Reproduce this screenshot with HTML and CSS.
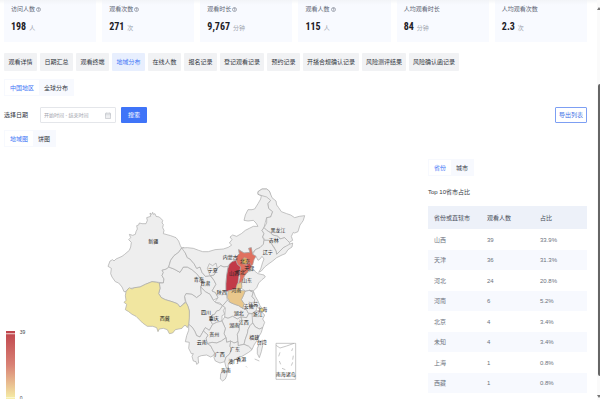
FILE: index.html
```html
<!DOCTYPE html>
<html lang="zh-CN">
<head>
<meta charset="utf-8">
<title>地域分布</title>
<link rel="stylesheet" href="styles.css">
</head>
<body>
<main class="page">
  <section class="stats">
    <div class="stat"><div class="stat-name">访问人数<svg class="help" viewBox="0 0 10 10"><circle cx="5" cy="5" r="4"/><path d="M3.6 4a1.4 1.4 0 1 1 1.4 1.5v1M5 7.2v.8"/></svg></div><div class="stat-value"><b>198</b><span>人</span></div></div>
    <div class="stat"><div class="stat-name">观看次数<svg class="help" viewBox="0 0 10 10"><circle cx="5" cy="5" r="4"/><path d="M3.6 4a1.4 1.4 0 1 1 1.4 1.5v1M5 7.2v.8"/></svg></div><div class="stat-value"><b>271</b><span>次</span></div></div>
    <div class="stat"><div class="stat-name">观看时长<svg class="help" viewBox="0 0 10 10"><circle cx="5" cy="5" r="4"/><path d="M3.6 4a1.4 1.4 0 1 1 1.4 1.5v1M5 7.2v.8"/></svg></div><div class="stat-value"><b>9,767</b><span>分钟</span></div></div>
    <div class="stat"><div class="stat-name">观看人数<svg class="help" viewBox="0 0 10 10"><circle cx="5" cy="5" r="4"/><path d="M3.6 4a1.4 1.4 0 1 1 1.4 1.5v1M5 7.2v.8"/></svg></div><div class="stat-value"><b>115</b><span>人</span></div></div>
    <div class="stat"><div class="stat-name">人均观看时长</div><div class="stat-value"><b>84</b><span>分钟</span></div></div>
    <div class="stat"><div class="stat-name">人均观看次数</div><div class="stat-value"><b>2.3</b><span>次</span></div></div>
  </section>

  <nav class="tabs">
    <button class="tab">观看详情</button>
    <button class="tab">日期汇总</button>
    <button class="tab">观看终端</button>
    <button class="tab active">地域分布</button>
    <button class="tab">在线人数</button>
    <button class="tab">报名记录</button>
    <button class="tab">登记观看记录</button>
    <button class="tab">预约记录</button>
    <button class="tab">开播合规确认记录</button>
    <button class="tab">风险测评结果</button>
    <button class="tab">风险确认函记录</button>
  </nav>

  <div class="segment"><button class="seg active">中国地区</button><button class="seg">全球分布</button></div>

  <form class="filter">
    <label for="range">选择日期</label>
    <div class="range">
      <input id="range" type="text" placeholder="开始时间 - 结束时间">
      <svg class="calendar" viewBox="0 0 12 14"><path d="M1 2.5h10v10.5H1zM1 5.5h10M3.5 1v2M8.500 1v2M3 8h2M7 8h2M3 10.500h2M7 10.500h2"/></svg>
    </div>
    <button class="search" type="button">搜索</button>
    <button class="export" type="button">导出列表</button>
  </form>

  <div class="content">
    <section class="chart">
      <div class="segment"><button class="seg active">地域图</button><button class="seg">饼图</button></div>
      <svg class="map" viewBox="0 450 1284 750" role="img" aria-label="中国地域分布">
        <defs>
          <linearGradient id="heat" x1="0" y1="0" x2="0" y2="1">
            <stop offset="0" stop-color="#bf444c"/><stop offset=".5" stop-color="#d98275"/><stop offset="1" stop-color="#f6efa6"/>
          </linearGradient>
        </defs>
        <g class="legend">
          <rect x="18" y="996" width="27" height="204" fill="url(#heat)"/>
          <path d="M18 1004h27" stroke="#e9b4b4" stroke-width="4"/>
          <path d="M18 1196h27" stroke="#fbf7d3" stroke-width="3"/>
          <text x="59" y="1004">39</text>
          <text x="59" y="1204">0</text>
        </g>
        <g transform="translate(300 540)">
          <g class="land">
            <path d="M245 207L241 200L236 186L228 176L212 170L190 164L192 154L188 146L190 136L186 132L188 124L178 114L168 112L165 104L160 106L158 100L155 106L150 102L152 112L140 116L142 124L138 134L126 134L118 132L116 138L110 140L112 150L108 158L106 166L98 169L88 166L92 176L86 182L94 190L92 204L88 214L74 226L66 232L48 240L42 246L38 242L30 246L24 262L34 268L32 284L36 294L46 308L56 312L66 324L72 338L78 338L84 330L104 326L120 324L136 316L156 308L176 310L190 312L192 300L186 290L190 280L186 274L200 270L206 264L212 244L222 230L236 220Z"/>
            <path d="M206 264L222 270L240 280L250 264L262 264L276 272L290 284L300 296L308 310L302 324L304 345L290 356L276 346L258 344L254 354L256 368L248 376L240 384L232 374L216 368L196 362L184 356L176 344L180 328L178 312L190 312L192 300L186 290L190 280L186 274L200 270Z"/>
            <path d="M245 207L236 220L222 230L212 244L206 264L222 270L240 280L250 264L262 264L276 272L290 284L300 296L308 310L302 324L316 338L330 346L340 364L354 356L346 340L336 336L348 316L342 304L330 290L316 292L306 280L300 264L290 268L282 254L270 240L262 236L256 222L252 206Z"/>
            <path d="M245 207L262 206L280 208L296 214L308 218L325 218L345 212L370 210L385 205L395 198L388 192L396 182L390 174L398 168L410 172L424 164L436 154L448 148L460 142L474 142L468 132L460 124L444 126L432 124L436 108L444 92L456 92L464 90L474 74L482 60L484 50L474 46L474 38L486 30L500 30L508 36L512 50L516 62L524 66L526 78L518 90L512 84L508 72L512 64L504 74L506 88L518 98L512 114L500 116L496 130L492 146L486 154L492 164L488 174L492 184L490 196L480 206L466 212L454 226L454 206L446 208L450 220L432 222L416 212L418 224L410 232L408 244L396 248L384 262L372 264L362 260L352 268L342 288L332 290L316 292L306 280L300 264L290 268L282 254L270 240L262 236L256 222Z"/>
            <path d="M474 46L474 38L486 30L500 30L508 36L516 56L528 66L530 78L536 86L544 98L560 104L572 108L584 116L598 112L614 110L610 124L606 130L600 138L594 158L584 162L580 160L574 172L578 184L568 190L562 184L554 176L540 180L534 172L518 168L510 160L500 154L492 146L500 132L500 116L512 114L518 98L506 88L504 74L512 64L500 54L486 50Z"/>
            <path d="M492 146L486 154L492 164L488 174L496 184L506 184L514 194L522 204L528 216L530 226L542 214L550 206L562 202L570 196L568 190L562 184L554 176L540 180L534 172L518 168L510 160L500 154Z"/>
            <path d="M492 184L490 196L480 206L466 212L458 226L468 232L474 244L480 240L486 232L492 240L488 250L482 270L476 280L484 276L494 264L504 256L518 246L530 236L546 228L556 224L564 212L576 204L578 192L568 196L550 206L530 226L528 216L514 194L506 184Z"/>
            <path d="M332 290L342 304L348 316L336 336L346 340L354 356L344 370L360 372L368 380L382 364L378 338L378 310L380 290L384 262L372 264L362 260L352 268L342 288Z"/>
            <path d="M322 268L328 254L338 260L348 252L352 268L342 288L330 290Z"/>
            <path d="M424 308L432 288L446 278L462 272L466 278L474 284L492 288L496 294L486 302L476 312L470 326L460 336L448 334L436 336L424 328Z"/>
            <path d="M268 396L264 382L258 370L254 352L258 344L276 346L290 356L304 345L302 324L316 338L330 346L340 364L346 370L360 376L368 380L358 394L350 396L344 406L336 408L330 422L338 436L328 454L316 446L310 456L300 474L290 470L284 456L276 444L266 436Z"/>
            <path d="M368 380L376 386L370 394L374 406L366 410L366 426L350 430L338 436L330 422L336 408L344 406L350 396L358 394Z"/>
            <path d="M368 380L382 364L390 370L404 376L416 380L428 388L440 392L446 404L440 416L424 414L412 420L398 412L384 418L374 414L376 386Z"/>
            <path d="M434 338L448 334L460 340L456 352L464 362L462 374L472 382L468 396L456 404L444 402L440 392L428 388L432 374L424 362L430 350Z"/>
            <path d="M448 334L460 336L466 352L474 366L480 380L488 390L480 394L472 382L462 374L464 362L456 352L460 340Z"/>
            <path d="M468 396L480 394L484 398L494 408L488 420L494 430L488 446L478 450L466 444L458 432L452 418L456 404Z"/>
            <path d="M384 418L398 412L412 420L422 414L426 424L418 438L418 454L412 466L414 488L402 492L392 486L380 490L378 476L372 464L376 448L366 426L374 414Z"/>
            <path d="M424 414L440 416L446 404L456 404L458 432L450 440L444 452L442 464L436 480L432 496L414 500L414 488L412 466L418 454L418 438L426 424Z"/>
            <path d="M458 432L466 444L478 450L488 446L484 460L476 474L470 486L462 498L456 512L446 502L432 496L436 480L442 464L444 452L450 440Z"/>
            <path d="M310 456L316 446L328 454L338 436L350 430L366 426L376 448L372 464L378 476L364 486L350 492L336 490L322 494L318 478L324 468Z"/>
            <path d="M266 436L276 444L284 456L290 470L300 474L310 456L324 468L318 478L322 494L332 500L338 512L344 522L340 530L332 534L320 528L304 530L294 534L296 552L290 556L288 548L280 546L276 532L280 524L274 524L266 508L268 490L256 488L260 470L266 454Z"/>
            <path d="M322 494L336 490L350 492L364 486L378 476L380 490L392 486L390 502L396 510L388 526L378 534L374 548L360 552L346 546L342 536L344 522L338 512L332 500Z"/>
            <path d="M392 486L402 492L414 488L414 500L432 496L446 502L456 512L446 520L426 532L412 536L400 546L390 548L384 558L386 568L378 566L374 548L378 534L388 526L396 510L390 502Z"/>
            <path d="M362 584L370 577L382 578L380 590L376 600L368 606L361 600Z"/>
            <path d="M478 494L486 484L488 500L484 518L478 536L472 524L472 508Z"/>
          </g>
          <g class="land">
            <path fill="#f1e6a0" d="M78 338L84 330L88 326L96 330L104 326L120 324L136 316L156 308L170 310L178 312L180 328L176 344L184 356L196 362L216 368L232 374L240 384L250 376L258 370L264 382L268 396L268 416L266 436L262 446L258 440L252 440L246 448L236 450L226 452L218 462L208 464L202 452L190 448L178 450L174 458L170 446L158 442L142 442L128 432L118 422L108 412L96 406L86 398L76 392L80 376L72 370L78 364L76 350Z"/>
            <path fill="#e0705f" d="M416 212L418 224L410 232L408 244L412 256L422 264L418 280L420 296L416 312L414 328L424 324L426 306L434 290L444 278L448 264L458 258L462 242L468 232L458 226L454 206L446 208L450 220L432 222Z"/>
            <path fill="#c23a48" d="M408 244L396 248L388 256L384 268L380 290L378 314L378 338L392 334L408 330L414 312L416 296L418 280L422 264L412 256Z"/>
            <path fill="#e9c78c" d="M384 336L396 334L408 328L412 314L424 310L426 324L420 334L436 336L430 350L424 362L432 374L428 388L416 380L404 376L390 370L382 356Z"/>
            <path fill="#e7b35e" d="M426 244L432 236L440 238L444 250L436 256L428 254Z"/>
            <path fill="#c94949" d="M440 256L450 252L454 262L450 274L442 272Z"/>
            <path fill="#f1dc70" d="M480 388L488 388L492 396L484 398Z"/>
          </g>
          <path class="isles" d="M528 493h59v108h-59zM528 499l12 8l20-6l22-8M540 520l-4 12M538 546l4 10M546 568l10 4M574 560l4-10M580 530l-2 12M578 508l-3 8M438 562l3 3M464 540l14 6"/>
          <g class="names">
            <text x="160" y="191">新疆</text><text x="194" y="422">西藏</text><text x="296" y="307">青海</text><text x="316" y="318">甘肃</text><text x="338" y="279">宁夏</text><text x="391" y="239">内蒙古</text><text x="534" y="160">黑龙江</text><text x="521" y="189">吉林</text><text x="503" y="224">辽宁</text><text x="435" y="252">北京</text><text x="448" y="273">天津</text><text x="421" y="285">河北</text><text x="402" y="289">山西</text><text x="441" y="308">山东</text><text x="365" y="346">陕西</text><text x="409" y="339">河南</text><text x="318" y="405">四川</text><text x="341" y="423">重庆</text><text x="416" y="407">湖北</text><text x="446" y="387">安徽</text><text x="460" y="380">江苏</text><text x="487" y="396">上海</text><text x="473" y="410">浙江</text><text x="403" y="445">湖南</text><text x="431" y="435">江西</text><text x="343" y="471">贵州</text><text x="305" y="496">云南</text><text x="359" y="531">广西</text><text x="405" y="515">广东</text><text x="463" y="480">福建</text><text x="485" y="496">台湾</text><text x="424" y="546">香港</text><text x="400" y="553">澳门</text><text x="377" y="579">海南</text><text x="557" y="590">南海诸岛</text>
          </g>
        </g>
      </svg>
    </section>

    <section class="ranking">
      <div class="segment"><button class="seg active">省份</button><button class="seg">城市</button></div>
      <h2>Top 10省市占比</h2>
      <table>
        <thead><tr><th>省份或直辖市</th><th>观看人数</th><th>占比</th></tr></thead>
        <tbody>
          <tr><td>山西</td><td>39</td><td>33.9%</td></tr>
          <tr><td>天津</td><td>36</td><td>31.3%</td></tr>
          <tr><td>河北</td><td>24</td><td>20.8%</td></tr>
          <tr><td>河南</td><td>6</td><td>5.2%</td></tr>
          <tr><td>北京</td><td>4</td><td>3.4%</td></tr>
          <tr><td>未知</td><td>4</td><td>3.4%</td></tr>
          <tr><td>上海</td><td>1</td><td>0.8%</td></tr>
          <tr><td>西藏</td><td>1</td><td>0.8%</td></tr>
        </tbody>
      </table>
    </section>
  </div>
</main>
<div class="scrollbar"><i class="up"></i><i class="thumb"></i><i class="down"></i></div>
</body>
</html>
```
FILE: styles.css
```css
* { box-sizing: border-box; }
html, body { height: 100%; margin: 0; overflow: hidden; }
body {
  background: #fff;
  color: #33373f;
  font-family: "Liberation Sans", "Noto Sans CJK SC", sans-serif;
  font-size: 6px;
  line-height: 8px;
}
button, input { font: inherit; margin: 0; border: 0; }
button { display: block; white-space: nowrap; }

.page { padding: 0 13px 0 4px; background: linear-gradient(#f4f5f7, #fff 4px); }

.stats { display: grid; grid-template-columns: repeat(6, 1fr); gap: 6px; }
.stat { padding: 5px 7px 7px; background: linear-gradient(#f2f4f8, #f8faff 5px); }
.stat-name { display: flex; align-items: center; gap: 1px; color: #5d6573; }
.help { width: 5px; height: 5px; fill: none; stroke: #5d6573; }
.stat-value { display: flex; align-items: baseline; gap: 3px; margin-top: 7px; line-height: 14px; color: #a0a5ae; }
.stat-value b { color: #1d2026; font: bold 10px/14px "Liberation Sans Narrow", "Roboto Condensed", "Liberation Sans", sans-serif; }

.tabs { display: flex; gap: 3px; margin-top: 11px; }
.tab { min-width: 33px; height: 18px; padding: 0 4px; border-radius: 1px; background: #f1f2f4; color: #33373f; }
.tab.active { background: #e8effe; color: #3f76f6; }

.segment { display: flex; width: max-content; padding: 1px; background: #f7f9fe; }
.seg { height: 15px; padding: 0 5px; background: transparent; color: #33373f; }
.seg.active { background: #fff; color: #3f76f6; }
.tabs + .segment { margin-top: 8px; }

.filter { display: flex; align-items: center; height: 16px; margin-top: 11px; }
.filter label { width: 36px; }
.range { display: flex; align-items: center; width: 76px; height: 16px; padding: 0 4px 0 3px; border: 1px solid #e4e6ea; border-radius: 1px; }
.range input { flex: 1; min-width: 0; height: 12px; padding: 0; background: transparent; font-size: 5px; outline: 0; }
.range input::placeholder { color: #9fa4ad; opacity: 1; }
.calendar { width: 6px; height: 7px; fill: none; stroke: #a5a9b1; }
.search { height: 16px; margin-left: 5px; padding: 0 7px; border-radius: 1px; background: #3f74f8; color: #fff; }
.export { height: 16px; margin-left: auto; padding: 0 3px; border: 1px solid #7d9ff3; border-radius: 1px; background: #fff; color: #3f70e6; }

.content { display: grid; grid-template-columns: 8fr 3fr; }
.chart { margin-left: -4px; padding-top: 7px; }
.chart .segment { margin-left: 4px; }
.map { display: block; width: 100%; margin-top: 2px; }
.land path { stroke: #a8a8a8; stroke-width: 2; stroke-linejoin: round; }
.land { fill: #eee; }
.isles { fill: none; stroke: #aaa; stroke-width: 2; }
.names { fill: #222; font-size: 15px; text-anchor: middle; }
.legend text { fill: #444; font-size: 15px; }

.ranking { padding-top: 36px; }
h2 { margin: 12px 0 10px; font-size: 6px; font-weight: 400; line-height: 8px; }
table { width: 100%; border-collapse: collapse; table-layout: fixed; }
th, td { padding: 0 0 0 6px; text-align: left; font-weight: 400; white-space: nowrap; }
th { height: 23px; background: #edf1f9; color: #454b57; }
td { height: 21px; color: #6b717c; }
tbody tr:nth-child(even) { background: #f7f9fe; }
tbody tr:nth-child(even) td { height: 20px; }

.scrollbar { position: fixed; top: 0; right: 0; bottom: 0; width: 3px; background: #fafafa; }
.thumb { position: absolute; top: 21%; bottom: 6%; left: 1px; right: 0; border-radius: 2px 0 0 2px; background: #666; }
.up, .down { position: absolute; left: 0; border: 2px solid transparent; }
.up { top: 5px; border-bottom: 3px solid #777; }
.down { bottom: 0; border-top: 3px solid #777; }
```
